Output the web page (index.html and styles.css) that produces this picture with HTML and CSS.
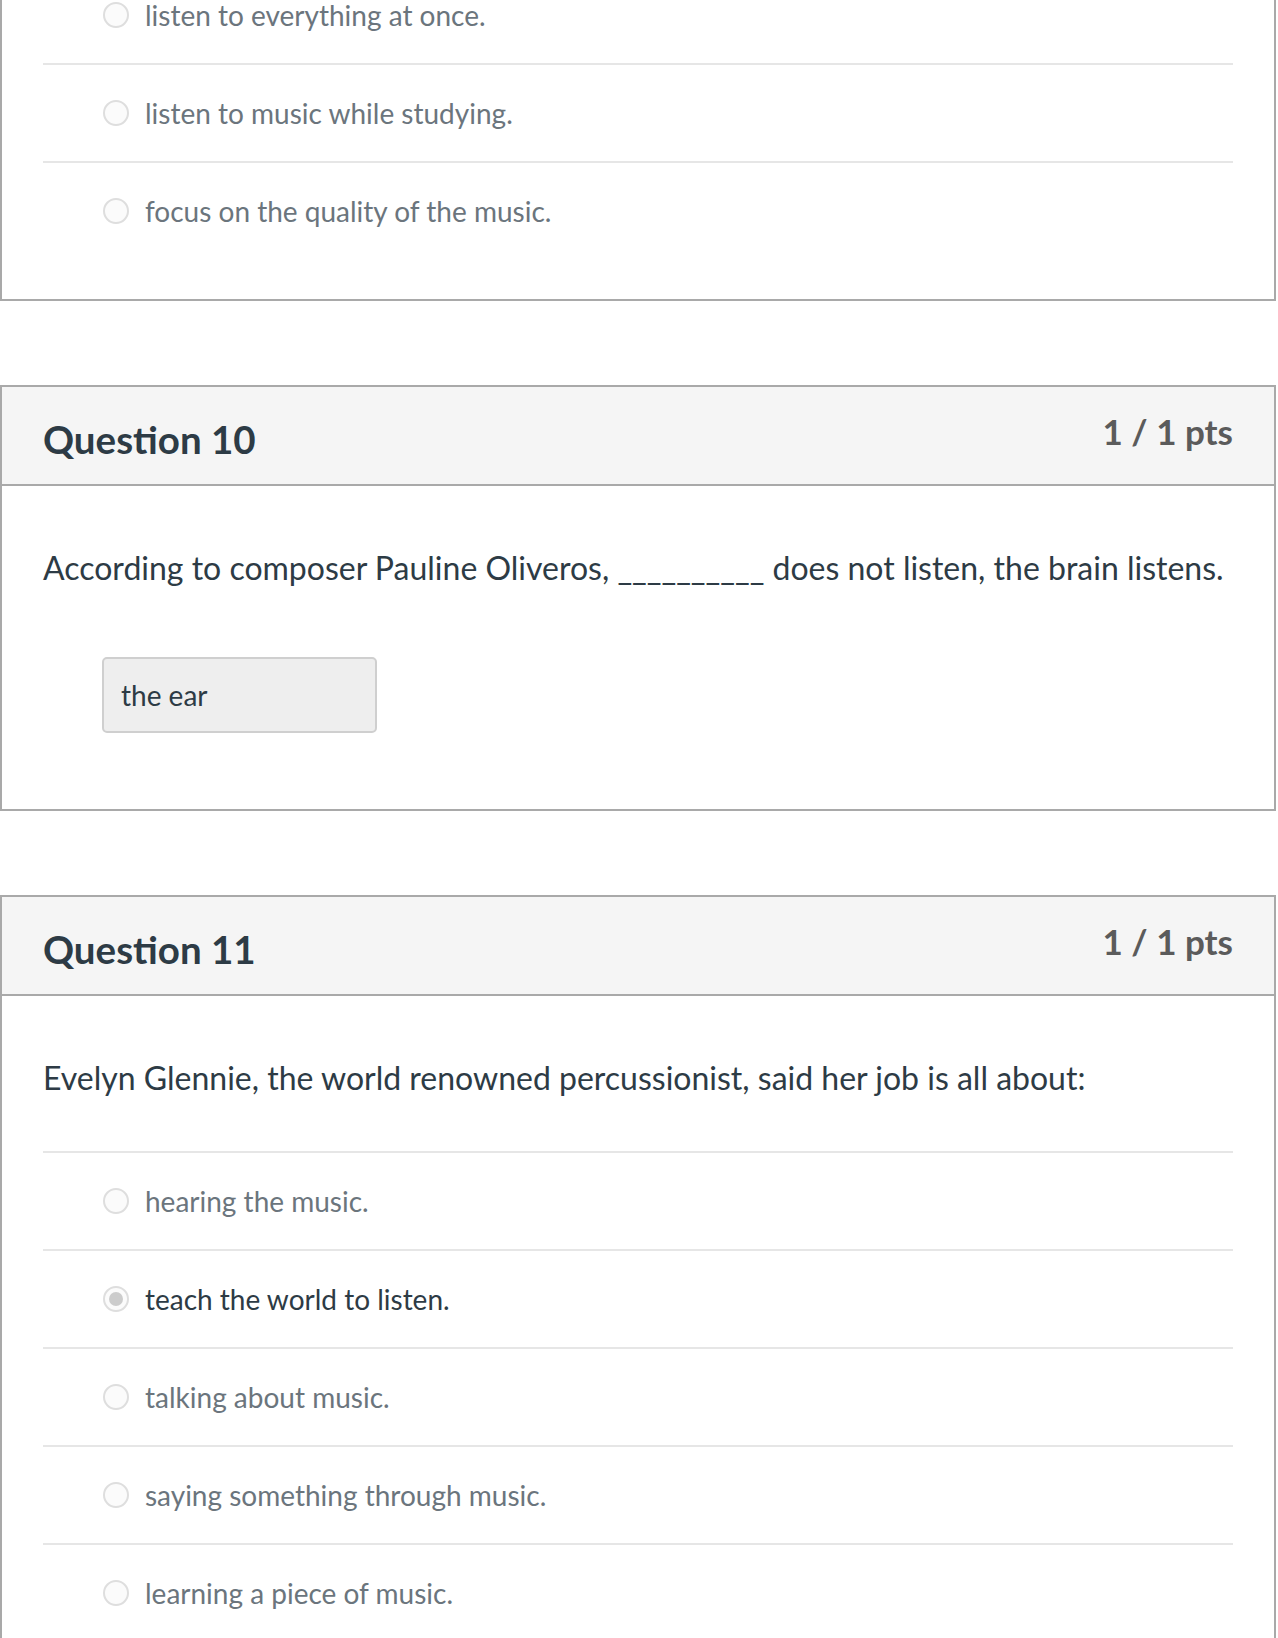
FILE: index.html
```html
<!DOCTYPE html>
<html lang="en">
<head>
<meta charset="utf-8">
<title>Quiz results</title>
<link rel="stylesheet" href="styles.css">
</head>
<body>
<main class="page">
  <section class="card card-cut">
    <div class="card-body cut-body">
      <ul class="answers">
        <li class="answer answer-first"><span class="radio"></span><span class="answer-text">listen to everything at once.</span></li>
        <li class="answer"><span class="radio"></span><span class="answer-text">listen to music while studying.</span></li>
        <li class="answer"><span class="radio"></span><span class="answer-text">focus on the quality of the music.</span></li>
      </ul>
    </div>
  </section>

  <section class="card">
    <header class="card-header">
      <h2 class="q-title">Question 10</h2>
      <div class="q-pts">1 / 1 pts</div>
    </header>
    <div class="card-body">
      <p class="q-text">According to composer Pauline Oliveros, __________ does not listen, the brain listens.</p>
      <div class="fill-answer">the ear</div>
    </div>
  </section>

  <section class="card">
    <header class="card-header">
      <h2 class="q-title">Question 11</h2>
      <div class="q-pts">1 / 1 pts</div>
    </header>
    <div class="card-body">
      <p class="q-text">Evelyn Glennie, the world renowned percussionist, said her job is all about:</p>
      <ul class="answers">
        <li class="answer"><span class="radio"></span><span class="answer-text">hearing the music.</span></li>
        <li class="answer selected"><span class="radio"></span><span class="answer-text">teach the world to listen.</span></li>
        <li class="answer"><span class="radio"></span><span class="answer-text">talking about music.</span></li>
        <li class="answer"><span class="radio"></span><span class="answer-text">saying something through music.</span></li>
        <li class="answer"><span class="radio"></span><span class="answer-text">learning a piece of music.</span></li>
      </ul>
    </div>
  </section>
</main>
</body>
</html>
```

FILE: styles.css
```css
* { box-sizing: border-box; }

html, body {
  margin: 0;
  padding: 0;
  background: #ffffff;
}

body {
  font-family: Lato, "Open Sans", "Liberation Sans", sans-serif;
  color: #2d3b45;
}

.page {
  width: 1276px;
  display: flex;
  flex-direction: column;
  gap: 84px;
  padding-bottom: 40px;
}

.card {
  border: 2px solid #a9a9a9;
  background: #ffffff;
}

.card-cut {
  border-top: none;
}

.card-header {
  height: 99px;
  background: #f5f5f5;
  border-bottom: 2px solid #a9a9a9;
  display: flex;
  justify-content: space-between;
  align-items: flex-start;
  padding: 0 41px;
}

.q-title {
  margin: 0;
  padding-top: 28px;
  font-size: 38.5px;
  font-weight: 700;
  line-height: 48px;
  color: #2d3b45;
}

.q-pts {
  padding-top: 21px;
  font-size: 35px;
  font-weight: 700;
  line-height: 46px;
  color: #5b5b5b;
}

.card-body {
  padding: 59px 41px 76px;
}

.cut-body {
  padding-top: 0;
  padding-bottom: 40px;
}

.q-text {
  margin: 0;
  font-size: 32px;
  line-height: 45px;
  color: #2d3b45;
}

.fill-answer {
  margin: 67px 0 0 59px;
  width: 275px;
  height: 76px;
  background: #eeeeee;
  border: 2px solid #cfcfcf;
  border-radius: 5px;
  padding: 0 17px;
  display: flex;
  align-items: center;
  font-size: 28px;
  color: #2d3b45;
}

.answers {
  list-style: none;
  margin: 51px 0 0;
  padding: 0;
}

.cut-body .answers {
  margin-top: 0;
}

.answer {
  height: 98px;
  border-top: 2px solid #e6e6e6;
  display: flex;
  align-items: center;
  padding-left: 60px;
  gap: 16px;
  font-size: 28px;
  color: #6b757d;
}

.answer-first {
  height: 63px;
  border-top: none;
  padding-bottom: 33px;
}

.radio {
  flex: 0 0 auto;
  width: 26px;
  height: 26px;
  border-radius: 50%;
  border: 2px solid #dedede;
  background: #fbfbfb;
  position: relative;
}

.selected {
  color: #2d3b45;
}

.selected .radio::after {
  content: "";
  position: absolute;
  left: 4px;
  top: 4px;
  width: 14px;
  height: 14px;
  border-radius: 50%;
  background: #cccccc;
}
```
